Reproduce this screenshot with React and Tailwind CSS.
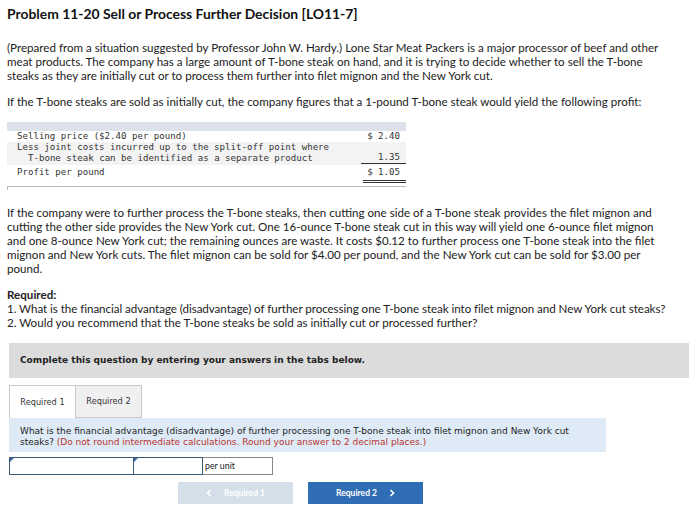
import React from 'react';

// 본문 줄 (원본과 같은 위치에서 줄바꿈)
const Lines = ({ lines, className = '' }) => (
  <div className={className}>
    {lines.map((l, i) => (
      <div key={i} className="whitespace-nowrap">{l}</div>
    ))}
  </div>
);

// 버튼 화살표
const Chevron = ({ dir }) => (
  <svg width="6" height="8" viewBox="0 0 6 8" className="shrink-0">
    <polyline
      points={dir === 'left' ? '4.5,1 1.5,4 4.5,7' : '1.5,1 4.5,4 1.5,7'}
      fill="none"
      stroke="currentColor"
      strokeWidth="1.6"
    />
  </svg>
);

const App = () => {
  return (
    <div className="w-[700px] h-[525px] bg-white text-[#222] overflow-hidden [font-family:Lato,'Open_Sans',sans-serif]">
      <div className="px-[7px] pt-[5px]">
        {/* 제목 */}
        <h1 className="text-[13.9px] leading-[18px] font-bold text-[#111]">
          Problem 11-20 Sell or Process Further Decision [LO11-7]
        </h1>

        <Lines
          className="mt-[18px] text-[11.6px] leading-[14px]"
          lines={[
            '(Prepared from a situation suggested by Professor John W. Hardy.) Lone Star Meat Packers is a major processor of beef and other',
            'meat products. The company has a large amount of T-bone steak on hand, and it is trying to decide whether to sell the T-bone',
            'steaks as they are initially cut or to process them further into filet mignon and the New York cut.',
          ]}
        />
        <p className="mt-[12px] text-[11.6px] leading-[14px] whitespace-nowrap">
          If the T-bone steaks are sold as initially cut, the company figures that a 1-pound T-bone steak would yield the following profit:
        </p>

        {/* 표 */}
        <div className="mt-[13px] w-[399px] [font-family:'DejaVu_Sans_Mono',monospace] text-[9.1px] text-[#333]">
          <div className="h-[9px] bg-[#dde2ea]" />
          <div className="flex items-end h-[11px] pl-[10px] bg-white">
            <span className="flex-1 leading-[11px]">Selling price ($2.40 per pound)</span>
            <span className="w-[45px] pr-[6px] text-right leading-[11px]">$ 2.40</span>
          </div>
          <div className="flex items-end pl-[10px] bg-[#f3f3f3] pb-[1px]">
            <div className="flex-1 leading-[11px]">
              <div>Less joint costs incurred up to the split-off point where</div>
              <div className="pl-[11px]">T-bone steak can be identified as a separate product</div>
            </div>
            <span className="w-[45px] pr-[6px] text-right leading-[11px] border-b border-[#333]">1.35</span>
          </div>
          <div className="flex items-start h-[18px] pl-[10px] bg-white pt-[2px]">
            <span className="flex-1 leading-[11px]">Profit per pound</span>
            <span className="w-[43px] pr-[6px] text-right leading-[11px] border-b-[3px] border-double border-[#333] pb-[2px]">$ 1.05</span>
          </div>
          <div className="mt-[3px] h-[4px] border-t border-l border-[#bbb]" />
        </div>

        <Lines
          className="mt-[16px] text-[11.6px] leading-[14px]"
          lines={[
            'If the company were to further process the T-bone steaks, then cutting one side of a T-bone steak provides the filet mignon and',
            'cutting the other side provides the New York cut. One 16-ounce T-bone steak cut in this way will yield one 6-ounce filet mignon',
            'and one 8-ounce New York cut; the remaining ounces are waste. It costs $0.12 to further process one T-bone steak into the filet',
            'mignon and New York cuts. The filet mignon can be sold for $4.00 per pound, and the New York cut can be sold for $3.00 per',
            'pound.',
          ]}
        />

        <div className="mt-[12px] text-[11.6px] leading-[14px] whitespace-nowrap">
          <div className="font-bold">Required:</div>
          <div className="tracking-[-0.05px]">1. What is the financial advantage (disadvantage) of further processing one T-bone steak into filet mignon and New York cut steaks?</div>
          <div>2. Would you recommend that the T-bone steaks be sold as initially cut or processed further?</div>
        </div>
      </div>

      {/* 문제 위젯 */}
      <div className="mx-[9px] mt-[13px] w-[680px] [font-family:'DejaVu_Sans',Verdana,sans-serif]">
        <div className="h-[35px] bg-[#dcdcdc] flex items-center pl-[11px] text-[9px] font-bold text-[#222]">
          Complete this question by entering your answers in the tabs below.
        </div>

        <div className="mt-[7px] flex h-[33px] text-[8.2px] text-[#333]">
          <div className="w-[67px] border border-b-0 border-[#c8c8c8] bg-white flex items-center justify-center">Required 1</div>
          <div className="w-[66px] border border-l-0 border-[#c8c8c8] bg-[#f0f0f0] flex items-center justify-center">Required 2</div>
        </div>

        <div className="w-[597px] bg-[#deebf7] px-[11px] pt-[8px] pb-[4px] text-[9px] leading-[11px] text-[#222] whitespace-nowrap">
          <div>What is the financial advantage (disadvantage) of further processing one T-bone steak into filet mignon and New York cut</div>
          <div>
            steaks? <span className="text-[#b8322e]">(Do not round intermediate calculations. Round your answer to 2 decimal places.)</span>
          </div>
        </div>

        <div className="mt-[5px] flex h-[18px]">
          <div className="relative w-[125px] border border-[#3a5a7a]">
            <span className="absolute left-0 top-0 w-0 h-0 border-t-[4px] border-r-[4px] border-t-[#3a6aa0] border-r-transparent" />
          </div>
          <div className="relative w-[69px] border border-l-0 border-[#3a5a7a]">
            <span className="absolute left-0 top-0 w-0 h-0 border-t-[4px] border-r-[4px] border-t-[#3a6aa0] border-r-transparent" />
          </div>
          <div className="w-[70px] border border-l-0 border-[#888] flex items-center pl-[2px] text-[8.8px] text-[#222] [font-family:Lato,sans-serif]">
            per unit
          </div>
        </div>

        <div className="mt-[7px] flex pl-[169px] gap-[15px] text-[8.5px] font-bold [font-family:Lato,sans-serif]">
          <div className="w-[115px] h-[22px] bg-[#d5dfea] text-white flex items-center justify-center gap-[12px]">
            <Chevron dir="left" />
            <span>Required 1</span>
          </div>
          <div className="w-[115px] h-[22px] bg-[#2f6db5] text-white flex items-center justify-center gap-[12px]">
            <span>Required 2</span>
            <Chevron dir="right" />
          </div>
        </div>
      </div>
    </div>
  );
};

export default App;
